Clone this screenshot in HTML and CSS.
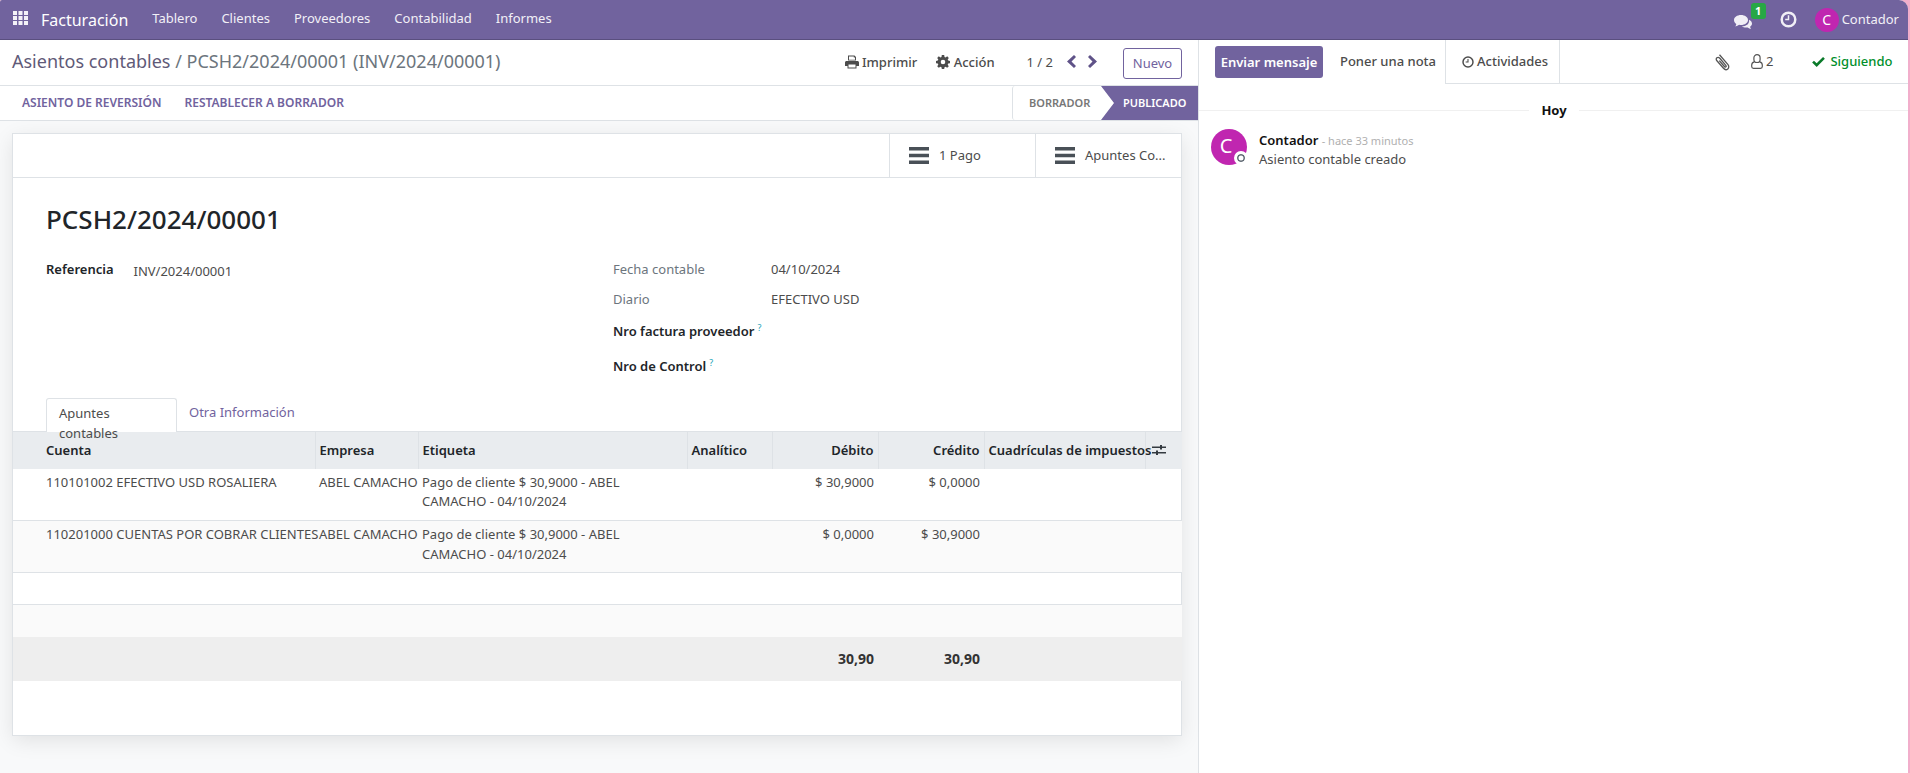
FILE: index.html
```html
<!DOCTYPE html>
<html lang="es">

<head>
    <meta charset="UTF-8">
    <meta name="viewport" content="width=device-width, initial-scale=1.0">
    <title>Asientos contables</title>

    <link rel="stylesheet" href="styles.css">
</head>

<body>
    <div class="app">
        <header class="navbar">
            <svg class="apps-icon" viewBox="0 0 15 14"><path d="M0 0h4v4H0zM5.5 0h4v4h-4zM11 0h4v4h-4zM0 5h4v4H0zM5.5 5h4v4h-4zM11 5h4v4h-4zM0 10h4v4H0zM5.5 10h4v4h-4zM11 10h4v4h-4z"/></svg>
            <span class="brand">Facturación</span>
            <nav class="menu">
                <a>Tablero</a>
                <a>Clientes</a>
                <a>Proveedores</a>
                <a>Contabilidad</a>
                <a>Informes</a>
            </nav>
            <div class="systray">
                <div class="chat-item">
                    <svg class="chat-icon" viewBox="0 0 18 15"><path d="M7 0c3.9 0 7 2.2 7 5s-3.100 5-7 5c-.7 0-1.300-.1-1.900-.2C4 10.600 2.800 11.200 1.300 11.500c.5-.8.900-1.600 1-2.500C.9 8 0 6.600 0 5c0-2.800 3.100-5 7-5z"/><path d="M15 4.700c1.800.8 3 2.200 3 3.800 0 1.300-.7 2.400-1.900 3.300.1.800.5 1.500 1 2.200-1.300-.2-2.500-.8-3.400-1.600-.6.1-1.100.2-1.700.2-1.700 0-3.200-.5-4.200-1.300 4 .1 8-2.300 7.200-6.600z"/></svg>
                    <span class="chat-badge">1</span>
                </div>
                <svg class="clock-icon" viewBox="0 0 18 18"><circle cx="9" cy="9" r="7.200" fill="none" stroke="currentColor" stroke-width="2.600"/><path d="M9.800 4.500v5.300H5.500V8.200h2.700V4.500z"/></svg>
                <div class="user">
                    <span class="user-avatar">C</span>
                    <span>Contador</span>
                </div>
            </div>
        </header>

        <div class="main">
            <section class="form-view">
                <div class="control-top">
                    <div class="breadcrumb"><a>Asientos contables</a> <span class="sep">/</span> <span>PCSH2/2024/00001 (INV/2024/00001)</span></div>
                    <div class="actions">
                        <span class="action action-print">
                            <svg class="icon" viewBox="0 0 14 13"><path d="M3 0h6.500L11 1.500V5H3zm1 1v3.200h6V2H8.800V1zM1.500 5.500h11c.8 0 1.500.7 1.500 1.500v3.500h-2.500V13h-9v-2.500H0V7c0-.8.700-1.500 1.500-1.500zM3.500 9v3h7V9z"/></svg>
                            Imprimir
                        </span>
                        <span class="action action-gear">
                            <svg class="icon" viewBox="0 0 14 14"><path fill-rule="evenodd" d="M5.800 0h2.400l.3 1.900 1.100.5L11.200 1.300l1.600 1.600-1.100 1.600.5 1.100 1.800.3v2.300l-1.800.3-.5 1.200 1.100 1.500-1.600 1.600-1.600-1.100-1.100.5-.3 1.800H5.800l-.3-1.800-1.100-.5-1.600 1.100-1.600-1.600 1.100-1.500-.5-1.200L0 8.200V5.900l1.800-.3.500-1.100-1.100-1.600 1.600-1.600 1.600 1.100 1.100-.5zM7 4.700a2.300 2.300 0 1 0 0 4.600 2.300 2.300 0 0 0 0-4.600z"/></svg>
                            Acción
                        </span>
                        <span class="pager">1 / 2</span>
                        <svg class="chevron chevron-prev" viewBox="0 0 9 13"><path d="M7 0l2 2-4.500 4.500L9 11l-2 2L0 6.500z"/></svg>
                        <svg class="chevron chevron-next" viewBox="0 0 9 13"><path d="M2 0L0 2l4.500 4.500L0 11l2 2 7-6.500z"/></svg>
                        <button class="btn-new" type="button">Nuevo</button>
                    </div>
                </div>
                <div class="control-bottom">
                    <div class="header-buttons">
                        <a>ASIENTO DE REVERSIÓN</a>
                        <a>RESTABLECER A BORRADOR</a>
                    </div>
                    <div class="statusbar">
                        <span class="status-off">BORRADOR</span>
                        <span class="status-on">PUBLICADO</span>
                    </div>
                </div>

                <div class="sheet-wrap">
                    <div class="sheet">
                        <div class="button-box">
                            <div class="stat-btn">
                                <svg class="bars" viewBox="0 0 20 17"><path d="M0 0h20v3.400H0zM0 6.800h20v3.400H0zM0 13.600h20V17H0z"/></svg>
                                <span>1 Pago</span>
                            </div>
                            <div class="stat-btn">
                                <svg class="bars" viewBox="0 0 20 17"><path d="M0 0h20v3.400H0zM0 6.800h20v3.400H0zM0 13.600h20V17H0z"/></svg>
                                <span>Apuntes Co...</span>
                            </div>
                        </div>

                        <h1 class="move-name">PCSH2/2024/00001</h1>

                        <div class="groups">
                            <div class="group group-left">
                                <span class="label">Referencia</span>
                                <span class="value ref-value">INV/2024/00001</span>
                            </div>
                            <div class="group group-right">
                                <div class="field"><span class="label-muted">Fecha contable</span><span class="value">04/10/2024</span></div>
                                <div class="field"><span class="label-muted">Diario</span><span class="value">EFECTIVO USD</span></div>
                                <div class="field field-help"><span class="label">Nro factura proveedor<sup>?</sup></span></div>
                                <div class="field field-help"><span class="label">Nro de Control<sup>?</sup></span></div>
                            </div>
                        </div>

                        <div class="tabs">
                            <a class="tab tab-active">Apuntes contables</a>
                            <a class="tab">Otra Información</a>
                        </div>

                        <table class="lines">
                            <colgroup>
                                <col class="col-account">
                                <col class="col-partner">
                                <col class="col-label">
                                <col class="col-analytic">
                                <col class="col-amount">
                                <col class="col-amount">
                                <col class="col-tax">
                                <col class="col-opt">
                            </colgroup>
                            <thead>
                                <tr>
                                    <th>Cuenta</th>
                                    <th>Empresa</th>
                                    <th>Etiqueta</th>
                                    <th>Analítico</th>
                                    <th class="num">Débito</th>
                                    <th class="num">Crédito</th>
                                    <th>Cuadrículas de impuestos</th>
                                    <th class="opt">
                                        <svg class="sliders" viewBox="0 0 14 12"><path d="M0 2.500h8V1h2v1.500h4v1.400h-4v1.500H8V3.900H0zM0 8.100h4V6.600h2v1.500h8v1.400H6V11H4V9.500H0z"/></svg>
                                    </th>
                                </tr>
                            </thead>
                            <tbody>
                                <tr class="line">
                                    <td>110101002 EFECTIVO USD ROSALIERA</td>
                                    <td>ABEL CAMACHO</td>
                                    <td>Pago de cliente $ 30,9000 - ABEL CAMACHO - 04/10/2024</td>
                                    <td></td>
                                    <td class="num">$ 30,9000</td>
                                    <td class="num">$ 0,0000</td>
                                    <td></td>
                                    <td></td>
                                </tr>
                                <tr class="line">
                                    <td>110201000 CUENTAS POR COBRAR CLIENTES</td>
                                    <td>ABEL CAMACHO</td>
                                    <td>Pago de cliente $ 30,9000 - ABEL CAMACHO - 04/10/2024</td>
                                    <td></td>
                                    <td class="num">$ 0,0000</td>
                                    <td class="num">$ 30,9000</td>
                                    <td></td>
                                    <td></td>
                                </tr>
                                <tr class="blank"><td colspan="8"></td></tr>
                                <tr class="blank"><td colspan="8"></td></tr>
                            </tbody>
                            <tfoot>
                                <tr>
                                    <td colspan="4"></td>
                                    <td class="num">30,90</td>
                                    <td class="num">30,90</td>
                                    <td colspan="2"></td>
                                </tr>
                            </tfoot>
                        </table>
                    </div>
                </div>
            </section>

            <aside class="chatter">
                <div class="chatter-top">
                    <button class="btn-send" type="button">Enviar mensaje</button>
                    <span class="chatter-tab tab-note">Poner una nota</span>
                    <span class="chatter-tab tab-activities">
                        <svg class="icon" viewBox="0 0 18 18"><circle cx="9" cy="9" r="7.500" fill="none" stroke="currentColor" stroke-width="2.200"/><path d="M9.800 4.500v5.300H5.500V8.200h2.700V4.500z"/></svg>
                        Actividades
                    </span>
                    <div class="chatter-tools">
                        <svg class="clip" viewBox="0 0 16 18"><path d="M4.500 1.800l8.300 9.600c1.300 1.500 1.300 3.400 0 4.500s-3 .9-4.300-.6L1.900 7.800C1 6.800 1 5.500 1.900 4.800s2-.5 2.900.5l6 7c.5.600.5 1.200.1 1.600s-1 .2-1.500-.4L4.300 7.600" fill="none" stroke="currentColor" stroke-width="1.300"/></svg>
                        <span class="followers">
                            <svg class="person" viewBox="0 0 12 15"><path d="M6 .7a3.100 3.100 0 0 1 3.100 3.100v1.600a3.100 3.100 0 0 1-6.200 0V3.800A3.100 3.100 0 0 1 6 .7zM3.300 7.800C1.800 8.200.7 9.400.7 11v1.500c0 1 .8 1.800 1.800 1.800h7c1 0 1.800-.8 1.800-1.800V11c0-1.600-1.100-2.800-2.600-3.200" fill="none" stroke="currentColor" stroke-width="1.200"/></svg>
                            2
                        </span>
                        <span class="following">
                            <svg class="check" viewBox="0 0 14 11"><path d="M5 11L0 6l2-2 3 3 7-7 2 2z"/></svg>
                            Siguiendo
                        </span>
                    </div>
                </div>

                <div class="day-sep"><span>Hoy</span></div>

                <div class="message">
                    <div class="msg-avatar">
                        C
                        <span class="msg-status"></span>
                    </div>
                    <div class="msg-body">
                        <div><strong>Contador</strong> <span class="msg-date">- hace 33 minutos</span></div>
                        <div>Asiento contable creado</div>
                    </div>
                </div>
            </aside>
        </div>
    </div>
</body>

</html>
```

FILE: styles.css
```css
/* Global reset */

* {
    margin: 0;
    padding: 0;
    box-sizing: border-box;
}

html,
body {
    height: 100%;
    overflow: hidden;
}

body {
    font-family: "Noto Sans", "Liberation Sans", sans-serif;
    font-size: 13px;
    line-height: 1.5;
    color: #4c4c4c;
    background-color: #f2aecb;
}

.app {
    width: 1908px;
    height: 773px;
    display: flex;
    flex-direction: column;
    background-color: white;
    border-radius: 2px 9px 0 0;
    overflow: hidden;
}

/* Top bar */

.navbar {
    height: 40px;
    flex: none;
    display: flex;
    align-items: center;
    padding-left: 13px;
    background-color: #71639e;
    border-bottom: 1px solid #5a4f7f;
    color: white;
}

.apps-icon {
    width: 15px;
    height: 14px;
    fill: #f4f2f8;
    margin-top: -4px;
}

.brand {
    font-size: 16px;
    margin-left: 13px;
}

.menu {
    display: flex;
    margin-left: 12px;
}

.menu a {
    padding: 0 12px;
    color: #f2f0f7;
    margin-top: -2px;
}

.systray {
    margin-left: auto;
    display: flex;
    align-items: center;
    padding-right: 9px;
}

.chat-item {
    display: flex;
    position: relative;
    width: 31px;
}

.chat-icon {
    width: 18px;
    height: 15px;
    fill: #f1eff6;
    margin-top: 5px;
}

.chat-badge {
    position: absolute;
    left: 17px;
    top: -7px;
    width: 15px;
    height: 16px;
    border-radius: 3px;
    background-color: #28a745;
    font-size: 11px;
    font-weight: 700;
    line-height: 15px;
    text-align: center;
}

.clock-icon {
    width: 17px;
    height: 17px;
    margin-left: 15px;
    color: #f1eff6;
    fill: #f1eff6;
}

.user {
    display: flex;
    align-items: center;
    margin-left: 18px;
    gap: 3px;
    color: #f2f0f7;
}

.user-avatar {
    width: 24px;
    height: 24px;
    border-radius: 50%;
    background-color: #c026b0;
    text-align: center;
    line-height: 24px;
    font-size: 14px;
    color: white;
}

.main {
    flex: 1;
    display: flex;
    min-height: 0;
}

/* Left side */

.form-view {
    width: 1199px;
    flex: none;
    display: flex;
    flex-direction: column;
    border-right: 1px solid #dee2e6;
    background-color: #f8f9fa;
}

.control-top {
    height: 46px;
    flex: none;
    display: flex;
    align-items: center;
    justify-content: space-between;
    padding: 0 16px 0 12px;
    background-color: white;
    border-bottom: 1px solid #dee2e6;
}

.breadcrumb {
    font-size: 18px;
    color: #6c757d;
    white-space: nowrap;
    margin-top: -3px;
}

.breadcrumb a {
    color: #5f5a78;
}

.actions {
    display: flex;
    align-items: center;
    color: #4c4c4c;
}

.icon {
    width: 14px;
    height: 14px;
    fill: currentColor;
    vertical-align: -2px;
}

.action {
    font-weight: 500;
    white-space: nowrap;
}

.action-gear {
    margin-left: 19px;
}

.pager {
    margin-left: 32px;
}

.chevron {
    width: 9px;
    height: 13px;
    fill: #5f5288;
    margin-top: -2px;
}

.chevron-prev {
    margin-left: 14px;
}

.chevron-next {
    margin-left: 12px;
}

.btn-new {
    width: 59px;
    height: 31px;
    margin-left: 26px;
    margin-top: 1px;
    border: 1px solid #71639e;
    border-radius: 3px;
    background-color: white;
    color: #71639e;
    font-family: inherit;
    font-size: 13px;
}

.control-bottom {
    height: 35px;
    flex: none;
    display: flex;
    justify-content: space-between;
    padding-left: 10px;
    background-color: white;
    border-bottom: 1px solid #dee2e6;
}

.header-buttons {
    display: flex;
    align-items: center;
    gap: 23px;
    padding-left: 12px;
    color: #71639e;
    font-size: 12px;
    font-weight: 600;
}

.statusbar {
    display: flex;
    font-size: 11px;
    font-weight: 600;
    line-height: 33px;
}

.status-off {
    width: 90px;
    padding-left: 16px;
    color: #777;
    border-left: 1px solid #dee2e6;
    border-radius: 3px 0 0 3px;
}

.status-on {
    width: 97px;
    margin-left: -1px;
    padding-left: 22px;
    background-color: #71639e;
    color: white;
    clip-path: polygon(0 0, 100% 0, 100% 100%, 0 100%, 13px 50%);
}

.sheet-wrap {
    flex: 1;
    padding: 12px 16px 0 12px;
}

.sheet {
    height: 603px;
    background-color: white;
    border: 1px solid #dee2e6;
    box-shadow: 0 5px 20px -1px rgba(0, 0, 0, 0.1);
}

.button-box {
    height: 44px;
    display: flex;
    justify-content: flex-end;
    border-bottom: 1px solid #dee2e6;
}

.stat-btn {
    width: 146px;
    display: flex;
    align-items: center;
    gap: 10px;
    padding-left: 19px;
    border-left: 1px solid #dee2e6;
}

.bars {
    width: 20px;
    height: 17px;
    fill: #495057;
}

.move-name {
    margin: 22px 0 0 33px;
    font-size: 26px;
    font-weight: 500;
    line-height: 39px;
    color: #212529;
}

.groups {
    display: flex;
    height: 159px;
    padding: 21px 0 0 33px;
}

.group-left {
    width: 567px;
    display: flex;
    align-items: flex-start;
}

.label {
    color: #212529;
    font-weight: 600;
}

.ref-value {
    margin-left: 20px;
    margin-top: 2px;
}

.group-right {
    flex: 1;
}

.field {
    display: flex;
    height: 30px;
}

.label-muted {
    width: 158px;
    color: #6c757d;
}

.field-help {
    height: 35px;
    padding-top: 1px;
}

.field-help sup {
    margin-left: 3px;
    color: #17a2b8;
    font-size: 9px;
    font-weight: 400;
}

.tabs {
    display: flex;
    height: 33px;
    padding-left: 33px;
}

.tab {
    padding: 5px 12px 0;
    color: #71639e;
}

.tab-active {
    position: relative;
    width: 131px;
    color: #4c4c4c;
    background-color: white;
    border: 1px solid #dee2e6;
    border-bottom: none;
    border-radius: 3px 3px 0 0;
    height: 34px;
}

/* Lines table */

.lines {
    width: 1169px;
    table-layout: fixed;
    border-collapse: collapse;
}

.col-account { width: 302px; }
.col-partner { width: 103px; }
.col-label { width: 269px; }
.col-analytic { width: 85px; }
.col-amount { width: 106px; }
.col-tax { width: 161px; }
.col-opt { width: 37px; }

.lines th {
    height: 37px;
    padding: 0 4px;
    background-color: #e9ecef;
    border-top: 1px solid #dee2e6;
    border-left: 1px solid #dee2e6;
    color: #212529;
    font-weight: 600;
    text-align: left;
    white-space: nowrap;
}

.lines th:first-child {
    padding-left: 33px;
    border-left: none;
}

.lines .num {
    text-align: right;
}

.lines th.opt {
    padding: 3px 0 0 6px;
}

.sliders {
    width: 14px;
    height: 12px;
    fill: #343a40;
}

.line td {
    height: 52px;
    padding: 4px 4px 8px;
    vertical-align: top;
    border-bottom: 1px solid #dee2e6;
}

.line td:first-child {
    padding-left: 33px;
    white-space: nowrap;
}

.line td:nth-child(2) {
    white-space: nowrap;
}

.line:nth-child(even) td,
.blank:nth-child(even) td {
    background-color: #fafafa;
}

.blank td {
    height: 32px;
    border-bottom: 1px solid #dee2e6;
}

.blank:last-child td {
    border-bottom: none;
}

.lines tfoot td {
    height: 44px;
    padding: 0 4px;
    background-color: #eeeeee;
    color: #333;
    font-size: 14px;
    font-weight: 700;
}

/* Chatter */

.chatter {
    flex: 1;
    min-width: 0;
}

.chatter-top {
    height: 44px;
    display: flex;
    align-items: flex-start;
    padding-left: 16px;
}

.btn-send {
    width: 108px;
    height: 32px;
    margin-top: 6px;
    border: none;
    border-radius: 3px;
    background-color: #71639e;
    color: white;
    font-family: inherit;
    font-size: 13px;
    font-weight: 600;
}

.chatter-tab {
    height: 44px;
    display: flex;
    align-items: center;
    color: #4c4c4c;
    font-weight: 500;
    white-space: nowrap;
}

.tab-note {
    width: 122px;
    padding-left: 17px;
}

.tab-activities {
    width: 115px;
    gap: 3px;
    padding-left: 16px;
    border-left: 1px solid #dee2e6;
    border-right: 1px solid #dee2e6;
    border-bottom: 1px solid #dee2e6;
}

.tab-activities .icon {
    width: 12px;
    height: 12px;
    color: #4c4c4c;
}

.chatter-tools {
    flex: 1;
    height: 44px;
    display: flex;
    align-items: center;
    padding-left: 155px;
    border-bottom: 1px solid #dee2e6;
    margin-right: 0;
}

.clip {
    width: 16px;
    height: 18px;
    color: #555;
}

.followers {
    display: flex;
    align-items: center;
    gap: 3px;
    margin-left: 20px;
}

.person {
    width: 12px;
    height: 15px;
    color: #555;
}

.following {
    display: flex;
    align-items: center;
    gap: 5px;
    margin-left: 39px;
    color: #008f2b;
    font-weight: 500;
}

.check {
    width: 13px;
    height: 10px;
    fill: #0a7a2a;
}

.day-sep {
    height: 1px;
    margin-top: 26px;
    background-color: #f0f0f0;
    display: flex;
    justify-content: center;
    align-items: center;
}

.day-sep span {
    padding: 0 12px;
    margin-left: 1px;
    background-color: white;
    color: #111;
    font-weight: 700;
}

.message {
    display: flex;
    gap: 12px;
    margin-top: 18px;
    padding-left: 12px;
}

.msg-avatar {
    position: relative;
    width: 36px;
    height: 36px;
    flex: none;
    border-radius: 50%;
    background-color: #c026b0;
    color: white;
    font-size: 20px;
    line-height: 34px;
    text-align: center;
    padding-right: 6px;
}

.msg-status {
    position: absolute;
    right: -1px;
    bottom: 0;
    width: 14px;
    height: 14px;
    border-radius: 50%;
    border: 3px solid white;
    background-color: #fff;
    box-shadow: inset 0 0 0 1.500px #5c6670;
}

.msg-body {
    margin-top: 2px;
    line-height: 18px;
}

.msg-body strong {
    color: #111;
    font-weight: 600;
}

.msg-date {
    color: #b0b0b0;
    font-size: 11px;
}
```
